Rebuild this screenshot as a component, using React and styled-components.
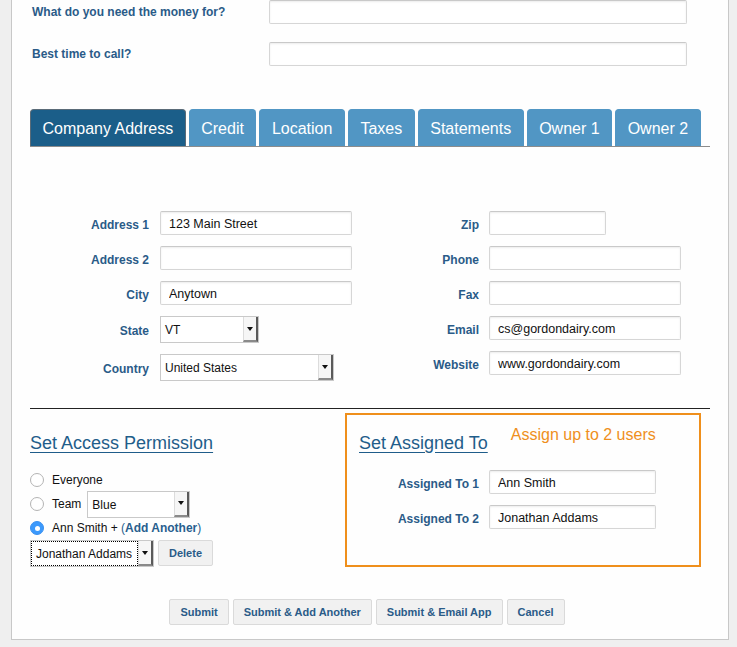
import React from "react";
import styled, { createGlobalStyle } from "styled-components";

const Global = createGlobalStyle`
  html, body { margin: 0; padding: 0; background: #efefef; }
  body { font-family: "Liberation Sans", Arial, Helvetica, sans-serif; color: #111; }
  * { box-sizing: border-box; }
`;

const Page = styled.div`
  padding: 0 8px 6px 11px;
`;

const Panel = styled.div`
  background: #fefefe;
  border: 1px solid #c8c8c8;
  border-top: 0;
  padding: 0 18px 14px 18px;
`;

const TopForm = styled.div`
  display: grid;
  grid-template-columns: 237px 418px;
  row-gap: 18px;
  align-items: center;
  padding-left: 2px;
`;

const Label = styled.label`
  font-size: 12px;
  font-weight: bold;
  color: #2a5b88;
  text-align: ${(p) => (p.$align === "left" ? "left" : "right")};
  padding-right: ${(p) => p.$pr || 0}px;
  padding-top: ${(p) => p.$pt || 0}px;
  white-space: nowrap;
`;

const Field = styled.input`
  display: block;
  width: ${(p) => (p.$w ? `${p.$w}px` : "100%")};
  height: 24px;
  border: 1px solid #d6d6d6;
  border-top-color: #c9c9c9;
  border-radius: 2px;
  box-shadow: inset 0 1px 2px rgba(0, 0, 0, 0.08);
  background: #fff;
  padding: 2px 8px 0 8px;
  font-family: "Liberation Sans", Arial, sans-serif;
  font-size: 12.5px;
  color: #111;
  outline: none;
`;

const TabBar = styled.div`
  display: flex;
  gap: 3px;
  margin-top: 43px;
  border-bottom: 1px solid #8c8c8c;
`;

const Tab = styled.div`
  height: 37px;
  display: flex;
  align-items: center;
  padding: 1px 11.5px 0 11.5px;
  border-radius: 4px 4px 0 0;
  background: ${(p) => (p.$active ? "#1b5e89" : "#5196c4")};
  border: 1px solid ${(p) => (p.$active ? "#5a6b78" : "#5196c4")};
  border-bottom: 0;
  color: #fff;
  font-size: 16px;
  white-space: nowrap;
`;

const AddressSection = styled.div`
  display: flex;
  margin-top: 64px;
  align-items: flex-start;
`;

const FieldGrid = styled.div`
  display: grid;
  grid-template-columns: ${(p) => p.$labelW}px 192px;
  row-gap: 11px;
  align-items: center;
`;

const SelectBox = styled.div`
  display: flex;
  width: ${(p) => p.$w}px;
  height: 27px;
  border: 1px solid #c9c9c9;
  background: #fff;
  font-size: 12px;
  color: #111;
`;

const SelectValue = styled.div`
  flex: 1;
  display: flex;
  align-items: center;
  padding-left: 4px;
  padding-top: 1px;
  margin: ${(p) => (p.$focused ? "1px" : "0")};
  outline: ${(p) => (p.$focused ? "1px dotted #000" : "none")};
  white-space: nowrap;
  overflow: hidden;
`;

const SelectArrow = styled.div`
  width: 15px;
  display: flex;
  align-items: center;
  justify-content: center;
  background: #f6f6f6;
  border-left: 1px solid #dcdcdc;
  border-right: 2px solid #5a5a5a;
  border-bottom: 2px solid #8a8a8a;
`;

const Caret = styled.span`
  width: 0;
  height: 0;
  border-left: 3px solid transparent;
  border-right: 3px solid transparent;
  border-top: 4px solid #111;
`;

function Select({ w, value, focused }) {
  return (
    <SelectBox $w={w}>
      <SelectValue $focused={focused}>{value}</SelectValue>
      <SelectArrow>
        <Caret />
      </SelectArrow>
    </SelectBox>
  );
}

const Divider = styled.hr`
  margin: 27px 0 0 0;
  border: 0;
  border-top: 1px solid #222;
  height: 0;
`;

const BottomSection = styled.div`
  display: flex;
  margin-top: 4px;
`;

const AccessColumn = styled.div`
  flex: 1;
  padding-top: 19px;
`;

const Heading = styled.h2`
  margin: ${(p) => p.$mt || 0}px 0 0 0;
  font-size: 18px;
  line-height: 22px;
  font-weight: normal;
  color: #1f5d8a;
  text-decoration: underline;
  text-underline-offset: 3px;
  white-space: nowrap;
`;

const RadioList = styled.div`
  margin-top: 14px;
  display: flex;
  flex-direction: column;
`;

const RadioRow = styled.div`
  height: 24px;
  display: flex;
  align-items: center;
  gap: 8px;
  font-size: 12px;
  color: #111;
`;

const Radio = styled.span`
  width: 14px;
  height: 14px;
  border-radius: 50%;
  flex: none;
  display: flex;
  align-items: center;
  justify-content: center;
  border: 1px solid ${(p) => (p.$checked ? "#3a90f0" : "#b4b4b4")};
  background: ${(p) => (p.$checked ? "#3b99fc" : "#fff")};
  &::after {
    content: "";
    width: 5px;
    height: 5px;
    border-radius: 50%;
    background: #fff;
    display: ${(p) => (p.$checked ? "block" : "none")};
  }
`;

const TeamText = styled.span`
  margin-right: -2px;
`;

const Link = styled.span`
  color: #285e8e;
`;

const LinkBold = styled.b`
  color: #285e8e;
`;

const UserRow = styled.div`
  height: 27px;
  display: flex;
  align-items: stretch;
  gap: 4px;
`;

const Button = styled.button`
  height: 26px;
  padding: 0 10px;
  background: #f1f1f1;
  border: 1px solid #dadada;
  border-radius: 2px;
  color: #2a5b88;
  font-family: "Liberation Sans", Arial, sans-serif;
  font-weight: bold;
  font-size: 11px;
  cursor: pointer;
`;

const AssignBox = styled.div`
  width: 356px;
  height: 154px;
  margin-right: 9px;
  border: 2px solid #ef8f1c;
  padding: 11px 12px 0 12px;
`;

const AssignHeader = styled.div`
  display: flex;
  align-items: flex-start;
  gap: 23px;
`;

const Note = styled.div`
  color: #ef8f1c;
  font-size: 16px;
  line-height: 18px;
  white-space: nowrap;
`;

const AssignGrid = styled.div`
  margin-top: 16px;
  display: grid;
  grid-template-columns: 130px 167px;
  row-gap: 11px;
  align-items: center;
`;

const Actions = styled.div`
  display: flex;
  justify-content: center;
  gap: 4px;
  margin-top: 32px;
  padding-right: 6px;
`;

const tabs = ["Company Address", "Credit", "Location", "Taxes", "Statements", "Owner 1", "Owner 2"];

export default function App() {
  return (
    <>
      <Global />
      <Page>
        <Panel>
          <TopForm>
            <Label $align="left">What do you need the money for?</Label>
            <Field />
            <Label $align="left">Best time to call?</Label>
            <Field />
          </TopForm>

          <TabBar>
            {tabs.map((t, i) => (
              <Tab key={t} $active={i === 0}>
                {t}
              </Tab>
            ))}
          </TabBar>

          <AddressSection>
            <FieldGrid $labelW={130}>
              <Label $pr={11} $pt={3}>Address 1</Label>
              <Field defaultValue="123 Main Street" />
              <Label $pr={11} $pt={3}>Address 2</Label>
              <Field />
              <Label $pr={11} $pt={3}>City</Label>
              <Field defaultValue="Anytown" />
              <Label $pr={11} $pt={2}>State</Label>
              <Select w={99} value="VT" />
              <Label $pr={11} $pt={2}>Country</Label>
              <Select w={174} value="United States" />
            </FieldGrid>
            <FieldGrid $labelW={137}>
              <Label $pr={10} $pt={3}>Zip</Label>
              <Field $w={117} />
              <Label $pr={10} $pt={3}>Phone</Label>
              <Field />
              <Label $pr={10} $pt={3}>Fax</Label>
              <Field />
              <Label $pr={10} $pt={3}>Email</Label>
              <Field defaultValue="cs@gordondairy.com" />
              <Label $pr={10} $pt={3}>Website</Label>
              <Field defaultValue="www.gordondairy.com" />
            </FieldGrid>
          </AddressSection>

          <Divider />

          <BottomSection>
            <AccessColumn>
              <Heading>Set Access Permission</Heading>
              <RadioList>
                <RadioRow>
                  <Radio />
                  <span>Everyone</span>
                </RadioRow>
                <RadioRow>
                  <Radio />
                  <TeamText>Team</TeamText>
                  <Select w={103} value="Blue" />
                </RadioRow>
                <RadioRow>
                  <Radio $checked />
                  <span>
                    Ann Smith + <Link>(<LinkBold>Add Another</LinkBold>)</Link>
                  </span>
                </RadioRow>
                <UserRow>
                  <Select w={124} value="Jonathan Addams" focused />
                  <Button>Delete</Button>
                </UserRow>
              </RadioList>
            </AccessColumn>

            <AssignBox>
              <AssignHeader>
                <Heading $mt={6}>Set Assigned To</Heading>
                <Note>Assign up to 2 users</Note>
              </AssignHeader>
              <AssignGrid>
                <Label $pr={10} $pt={3}>Assigned To 1</Label>
                <Field defaultValue="Ann Smith" />
                <Label $pr={10} $pt={3}>Assigned To 2</Label>
                <Field defaultValue="Jonathan Addams" />
              </AssignGrid>
            </AssignBox>
          </BottomSection>

          <Actions>
            <Button>Submit</Button>
            <Button>Submit &amp; Add Another</Button>
            <Button>Submit &amp; Email App</Button>
            <Button>Cancel</Button>
          </Actions>
        </Panel>
      </Page>
    </>
  );
}
